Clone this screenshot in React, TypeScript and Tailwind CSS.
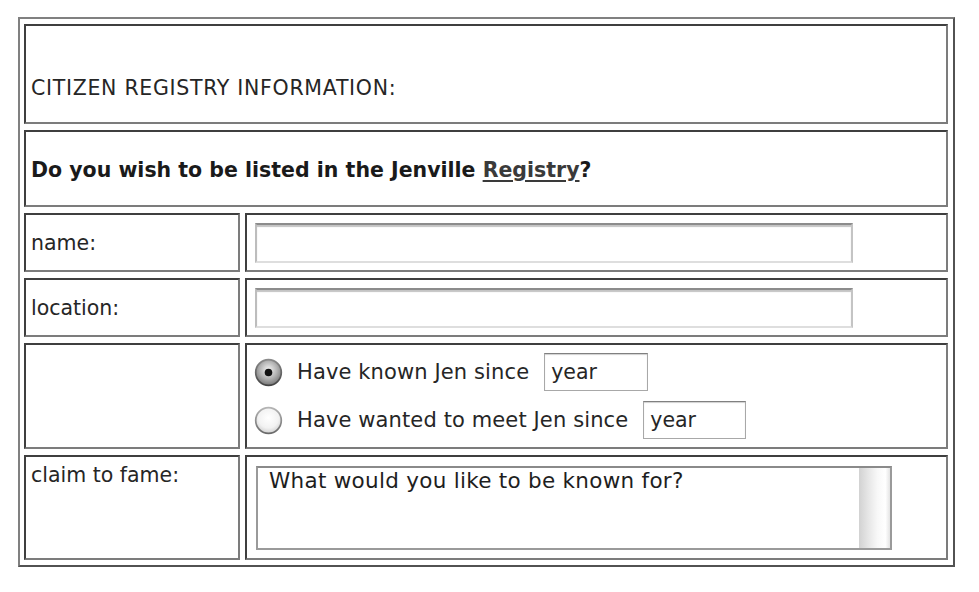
import React from "react";

function Radio({ checked }: { checked: boolean }) {
  return (
    <svg width="29" height="29" viewBox="0 0 29 29" className="shrink-0">
      <defs>
        <radialGradient id={checked ? "rgc" : "rgu"} cx="50%" cy="40%" r="60%">
          {checked ? (
            <>
              <stop offset="0%" stopColor="#f4f4f4" />
              <stop offset="55%" stopColor="#b4b4b4" />
              <stop offset="100%" stopColor="#767676" />
            </>
          ) : (
            <>
              <stop offset="0%" stopColor="#ffffff" />
              <stop offset="65%" stopColor="#f2f2f2" />
              <stop offset="100%" stopColor="#d0d0d0" />
            </>
          )}
        </radialGradient>
        <linearGradient id={checked ? "rlc" : "rlu"} x1="0" y1="0" x2="0" y2="1">
          <stop offset="0%" stopColor={checked ? "#8a8a8a" : "#b4b4b4"} />
          <stop offset="100%" stopColor={checked ? "#444444" : "#6a6a6a"} />
        </linearGradient>
      </defs>
      <circle
        cx="14.5"
        cy="14.5"
        r="12.8"
        fill={`url(#${checked ? "rgc" : "rgu"})`}
        stroke={`url(#${checked ? "rlc" : "rlu"})`}
        strokeWidth="1.7"
      />
      {checked && <circle cx="14.5" cy="14.5" r="3.8" fill="#111" />}
    </svg>
  );
}

function YearBox({ w }: { w: string }) {
  return (
    <div
      className={`${w} h-[38px] flex items-center pl-[6px] border border-[#a8a8a8] border-t-[#808080] shadow-[inset_0_1px_1px_#d0d0d0] bg-white`}
    >
      year
    </div>
  );
}

const cell =
  "border-2 border-t-[#3f3f3f] border-l-[#3f3f3f] border-b-[#7c7c7c] border-r-[#7c7c7c] bg-white";

export default function App() {
  return (
    <div className="w-[979px] h-[592px] bg-white pt-[17px] pl-[18px] font-['DejaVu_Sans',Verdana,sans-serif] text-[20.5px] leading-[24px] text-[#262626]">
      <div className="w-[937px] border-2 border-t-[#808080] border-l-[#808080] border-b-[#525252] border-r-[#525252] pl-[4px] pr-[5px] py-[5px]">
        <div className="grid grid-cols-[216px_703px] grid-rows-[100px_77px_59px_59px_106px_105px] gap-x-[5px] gap-y-[6px]">
          <div className={`${cell} col-span-2 flex items-center pl-[5px] pt-[27px] tracking-[0.7px]`}>
            CITIZEN REGISTRY INFORMATION:
          </div>
          <div className={`${cell} col-span-2 flex items-center pl-[5px] pt-[3px] font-bold text-[#1a1a1a]`}>
            <span>
              Do you wish to be listed in the Jenville{" "}
              <span className="underline underline-offset-[3px] text-[#3a3a3a]">Registry</span>?
            </span>
          </div>

          <div className={`${cell} flex items-center pl-[5px]`}>name:</div>
          <div className={`${cell} flex items-center pl-[8px]`}>
            <div className="w-[598px] h-[40px] border-2 border-t-[#8c8c8c] border-l-[#bdbdbd] border-r-[#c4c4c4] border-b-[#dedede] shadow-[inset_0_2px_1px_#c4c4c4] bg-white" />
          </div>

          <div className={`${cell} flex items-center pl-[5px]`}>location:</div>
          <div className={`${cell} flex items-center pl-[8px]`}>
            <div className="w-[598px] h-[40px] border-2 border-t-[#8c8c8c] border-l-[#bdbdbd] border-r-[#c4c4c4] border-b-[#dedede] shadow-[inset_0_2px_1px_#c4c4c4] bg-white" />
          </div>

          <div className={cell} />
          <div className={`${cell} flex flex-col pt-[8px] pl-[7px] gap-[10px]`}>
            <div className="flex items-center h-[38px]">
              <Radio checked />
              <span className="ml-[14px] text-[21px] tracking-[0.12px]">Have known Jen since</span>
              <div className="ml-[15px]">
                <YearBox w="w-[104px]" />
              </div>
            </div>
            <div className="flex items-center h-[38px]">
              <Radio checked={false} />
              <span className="ml-[14px] text-[21px] tracking-[0.12px]">Have wanted to meet Jen since</span>
              <div className="ml-[15px]">
                <YearBox w="w-[103px]" />
              </div>
            </div>
          </div>

          <div className={`${cell} pl-[5px] pt-[6px]`}>claim to fame:</div>
          <div className={`${cell} pl-[9px] pt-[9px]`}>
            <div className="w-[636px] h-[84px] border-2 border-[#9a9a9a] border-t-[#8a8a8a] flex bg-white">
              <div className="flex-1 pl-[11px] text-[21.5px] leading-[26px] tracking-[0.28px] text-[#1e1e1e]">
                What would you like to be known for?
              </div>
              <div className="w-[31px] h-full bg-[linear-gradient(to_right,#d2d2d2,#e6e6e6_30%,#f8f8f8_60%,#ffffff_85%,#e4e4e4)]" />
            </div>
          </div>
        </div>
      </div>
    </div>
  );
}
